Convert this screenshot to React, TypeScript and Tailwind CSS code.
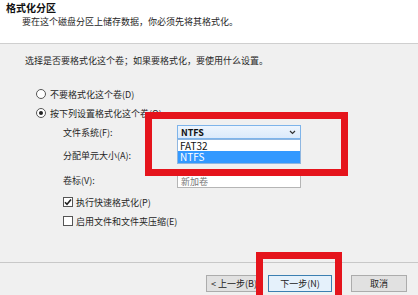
const font = { fontFamily: '"Noto Sans CJK SC", "Noto Sans", sans-serif' };

function Radio({ checked, label }: { checked?: boolean; label: string }) {
  return (
    <div className="flex h-[16px] items-center pl-[36px]">
      <span className="flex h-[10px] w-[10px] items-center justify-center rounded-full border border-[#555] bg-white">
        {checked && <span className="h-[4px] w-[4px] rounded-full bg-[#222]" />}
      </span>
      <span className="ml-[4px]">{label}</span>
    </div>
  );
}

function Check({ checked, label }: { checked?: boolean; label: string }) {
  return (
    <div className="flex h-[14px] items-center pl-[63px]">
      <span className="flex h-[10px] w-[10px] items-center justify-center border border-[#555] bg-white">
        {checked && (
          <svg width="8" height="8" viewBox="0 0 8 8">
            <path d="M1 4.2 L3 6.2 L7 1.5" fill="none" stroke="#222" strokeWidth="1.6" />
          </svg>
        )}
      </span>
      <span className="ml-[3px]">{label}</span>
    </div>
  );
}

export default function App() {
  return (
    <div
      className="relative h-[295px] w-[418px] overflow-hidden bg-[#f0f0f0] text-[9px] leading-none text-[#262626]"
      style={font}
    >
      {/* header */}
      <div className="h-[44px] border-b border-[#cfcfcf] bg-white pl-[6px]">
        <div className="flex h-[16px] items-center text-[10px] font-bold text-[#111]">格式化分区</div>
        <div className="flex h-[10px] items-center pl-[16px]">要在这个磁盘分区上储存数据，你必须先将其格式化。</div>
      </div>

      {/* body */}
      <div className="h-[210px] border-b border-[#c8c8c8]">
        <div className="mt-[9px] flex h-[14px] items-center pl-[25px]">
          选择是否要格式化这个卷；如果要格式化，要使用什么设置。
        </div>

        <div className="mt-[19px]">
          <Radio label="不要格式化这个卷(D)" />
        </div>
        <div className="mt-[3px]">
          <Radio checked label="按下列设置格式化这个卷(O):" />
        </div>

        <div className="relative mt-[4px] flex h-[14px] items-center">
          <span className="w-[177px] shrink-0 pl-[63px]">文件系统(F):</span>
          <div className="flex h-[14px] w-[124px] items-center justify-between border border-[#7eb4ea] bg-gradient-to-b from-[#eef5fd] to-[#dbeafb] pl-[3px] pr-[4px] text-[#111]">
            <span className="font-semibold">NTFS</span>
            <svg width="7" height="5" viewBox="0 0 7 5">
              <path d="M1 1 L3.5 3.5 L6 1" fill="none" stroke="#333" strokeWidth="1.2" />
            </svg>
          </div>
          {/* open list */}
          <div className="absolute left-[177px] top-[14px] z-10 w-[124px] border border-[#8fb6e0] bg-white text-[10px]">
            <div className="flex h-[11px] items-center pl-[2px] text-[#111]">FAT32</div>
            <div className="flex h-[12px] items-center bg-[#3399ff] pl-[2px] text-white">NTFS</div>
          </div>
        </div>

        <div className="mt-[9px] flex h-[14px] items-center">
          <span className="pl-[63px]">分配单元大小(A):</span>
        </div>

        <div className="mt-[10px] flex h-[16px] items-center">
          <span className="w-[177px] shrink-0 pl-[63px]">卷标(V):</span>
          <div className="flex h-[16px] w-[124px] items-center border border-[#b5b5b5] bg-white pl-[3px] pt-[3px] text-[#777]">
            新加卷
          </div>
        </div>

        <div className="mt-[7px]">
          <Check checked label="执行快速格式化(P)" />
        </div>
        <div className="mt-[5px]">
          <Check label="启用文件和文件夹压缩(E)" />
        </div>
      </div>

      {/* footer */}
      <div className="flex h-[40px] items-start justify-end border-b border-[#c8c8c8] pr-[11px] pt-[12px]">
        <button className="flex h-[17px] w-[56px] items-center justify-center border border-[#acacac] bg-[#e1e1e1] text-[#222]">
          &lt; 上一步(B)
        </button>
        <button className="ml-[6px] flex h-[17px] w-[64px] items-center justify-center border border-[#3c7fb1] bg-[#e5f1fb] text-[#222]">
          下一步(N)
        </button>
        <button className="ml-[19px] flex h-[17px] w-[56px] items-center justify-center border border-[#acacac] bg-[#e1e1e1] text-[#222]">
          取消
        </button>
      </div>

      {/* red highlight boxes */}
      <div className="pointer-events-none absolute left-[145px] top-[112px] h-[64px] w-[203px] border-[7px] border-[#e5141c]" />
      <div className="pointer-events-none absolute left-[256px] top-[252px] h-[50px] w-[86px] border-[7px] border-[#e5141c]" />
    </div>
  );
}
